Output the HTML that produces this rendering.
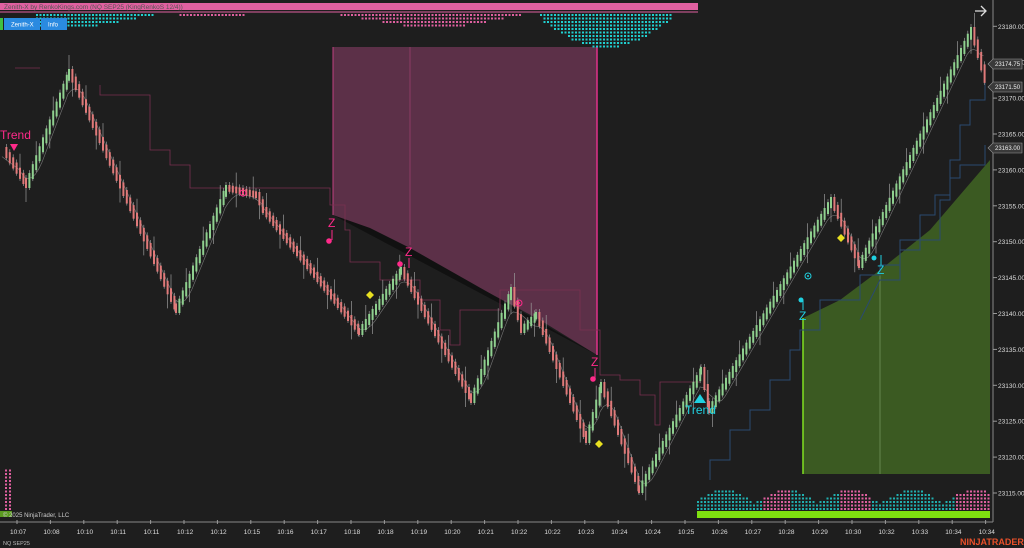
<!DOCTYPE html>
<html><head><meta charset="utf-8"><style>
html,body{margin:0;padding:0;background:#1e1e1e;width:1024px;height:548px;overflow:hidden;font-family:"Liberation Sans",sans-serif}
svg{position:absolute;left:0;top:0}
.t{font-size:6.5px;fill:#ddd}
</style></head><body>
<svg id="s" width="1024" height="548" viewBox="0 0 1024 548">
<rect width="1024" height="548" fill="#1e1e1e"/>
<polygon points="333,47 597,47 597,355 540,320 480,288 420,258 370,232 333,215" fill="#5c3048"/>
<polygon points="333,215 597,355 540,322 470,282 410,248 370,228" fill="#111"/>
<line x1="333" y1="47" x2="333" y2="215" stroke="#c04080" stroke-width="1"/>
<line x1="597" y1="47" x2="597" y2="355" stroke="#e0308a" stroke-width="1.5"/>
<line x1="410" y1="47" x2="410" y2="245" stroke="#a04070" stroke-width="0.7"/>
<polygon points="803,318 840,300 880,270 930,230 990,160 990,474 803,474" fill="#3b5a22"/>
<line x1="803" y1="318" x2="803" y2="474" stroke="#80e020" stroke-width="1.5"/>
<line x1="880" y1="270" x2="880" y2="474" stroke="#7a9a60" stroke-width="0.7"/>
<g id="lines"></g>
<g id="bars"></g>
<rect x="0" y="3" width="698" height="7" fill="#e060a0"/>
<line x1="0" y1="12" x2="698" y2="12" stroke="#e060a0" stroke-width="1"/>
<text x="4" y="9" font-size="6.5" fill="#555">Zenith-X by RenkoKings.com (NQ SEP25 (KingRenkoS 12/4))</text>
<g id="hist"></g>
<rect x="0" y="18" width="3" height="12" fill="#40c040"/>
<rect x="4" y="18" width="36" height="12" fill="#2a8ae0"/>
<rect x="41" y="18" width="26" height="12" fill="#2a8ae0"/>
<text x="11" y="26.5" font-size="6" fill="#fff">Zenith-X</text>
<text x="48" y="26.5" font-size="6" fill="#fff">Info</text>
<rect x="697" y="511" width="293" height="7" fill="#7fe010"/>
<rect x="0" y="511" width="12" height="6" fill="#5a9a20"/>
<text x="3" y="517" font-size="6" fill="#ccc">© 2025 NinjaTrader, LLC</text>
<line x1="0" y1="522" x2="993" y2="522" stroke="#888" stroke-width="1"/>
<line x1="993" y1="0" x2="993" y2="522" stroke="#888" stroke-width="1"/>
<g id="axis"></g>
<text x="3" y="545" font-size="5.5" fill="#bbb">NQ SEP25</text>
<text x="960" y="545" font-size="9" font-weight="bold" fill="#e8502a">NINJATRADER</text>
<path d="M975,11H985M981,6L986,11L981,16" fill="none" stroke="#ddd" stroke-width="1.3"/>
<g font-size="6" fill="#eee">
<polygon points="988,64 993,59 1022,59 1022,69 993,69" fill="#3a3a3a" stroke="#999" stroke-width="0.6"/><text x="995" y="66.2">23174.75</text>
<polygon points="988,87 993,82 1022,82 1022,92 993,92" fill="#3a3a3a" stroke="#999" stroke-width="0.6"/><text x="995" y="89.2">23171.50</text>
<polygon points="988,148 993,143 1022,143 1022,153 993,153" fill="#3a3a3a" stroke="#999" stroke-width="0.6"/><text x="995" y="150.2">23163.00</text>
</g>
<g font-size="12">
<text x="0" y="139" fill="#ff2a8a">Trend</text><polygon points="10,144 18,144 14,151" fill="#ff2a8a"/>
<text x="328" y="227" fill="#ff2a8a">Z</text><line x1="332" y1="230" x2="332" y2="240" stroke="#ff2a8a"/><circle cx="329" cy="241" r="2.8" fill="#ff2a8a"/>
<text x="405" y="256" fill="#ff2a8a">Z</text><line x1="409" y1="258" x2="409" y2="268" stroke="#ff2a8a"/><circle cx="400" cy="264" r="2.8" fill="#ff2a8a"/>
<text x="591" y="366" fill="#ff2a8a">Z</text><line x1="595" y1="368" x2="595" y2="378" stroke="#ff2a8a"/><circle cx="593" cy="379" r="2.8" fill="#ff2a8a"/>
<circle cx="243" cy="193" r="3" fill="none" stroke="#ff2a8a"/><circle cx="243" cy="193" r="1" fill="#ff2a8a"/>
<circle cx="519" cy="303" r="3" fill="none" stroke="#ff2a8a"/><circle cx="519" cy="303" r="1" fill="#ff2a8a"/>
<polygon points="370,291 374,295 370,299 366,295" fill="#e8e020"/>
<polygon points="599,440 603,444 599,448 595,444" fill="#e8e020"/>
<polygon points="841,234 845,238 841,242 837,238" fill="#e8e020"/>
<polygon points="700,394 706,403 694,403" fill="#20d0e0"/><text x="685" y="414" fill="#20d0e0">Trend</text>
<circle cx="801" cy="300" r="2.5" fill="#20d0e0"/><text x="799" y="320" fill="#20d0e0">Z</text><line x1="803" y1="300" x2="803" y2="310" stroke="#20d0e0"/>
<circle cx="874" cy="258" r="2.5" fill="#20d0e0"/><text x="877" y="274" fill="#20d0e0">Z</text><line x1="881" y1="255" x2="881" y2="265" stroke="#20d0e0"/>
<circle cx="808" cy="276" r="3" fill="none" stroke="#20d0e0"/><circle cx="808" cy="276" r="1" fill="#20d0e0"/>
</g>
</svg>
<script>
(function(){
var NS="http://www.w3.org/2000/svg";
function el(p,t,a){var e=document.createElementNS(NS,t);for(var k in a)e.setAttribute(k,a[k]);p.appendChild(e);return e;}
var ax=document.getElementById('axis');
var times=["10:07","10:08","10:10","10:11","10:11","10:12","10:12","10:15","10:16","10:17","10:18","10:18","10:19","10:20","10:21","10:22","10:22","10:23","10:24","10:24","10:25","10:26","10:27","10:28","10:29","10:30","10:32","10:33","10:34","10:34"];
for(var i=0;i<30;i++){var x=17+i*33.4;el(ax,'line',{x1:x,y1:520,x2:x,y2:524,stroke:'#999'});var t=el(ax,'text',{x:x-7,y:534,'class':'t'});t.textContent=times[i];}
for(var p=23115;p<=23180;p+=5){var y=493-(p-23115)*7.18;el(ax,'line',{x1:993,y1:y,x2:997,y2:y,stroke:'#999'});var t=el(ax,'text',{x:998,y:y+2.5,'class':'t'});t.textContent=p+".00";}
var piv=[[2,150],[25,185],[68,72],[175,310],[225,188],[255,195],[262,210],[358,332],[400,270],[470,400],[510,290],[520,330],[535,315],[585,440],[600,385],[638,490],[700,370],[708,410],[830,200],[858,265],[970,30],[985,85]];
var pts=[];for(var i=0;i<piv.length-1;i++){var a=piv[i],b=piv[i+1];for(var x=a[0];x<b[0];x+=3.4){pts.push([x,a[1]+(b[1]-a[1])*(x-a[0])/(b[0]-a[0])]);}}
var g=document.getElementById('bars'),L=document.getElementById('lines');
for(var i=1;i<pts.length;i++){var x=pts[i][0],y0=pts[i-1][1],y1=pts[i][1];var up=y1<y0;var tp=Math.min(y0,y1)-3,hh=Math.abs(y1-y0)+6;
var wl=(i*7)%5==0?14:3;el(g,'line',{x1:x+1,y1:tp-wl,x2:x+1,y2:tp+hh+((i*3)%7==0?14:2),stroke:'#999','stroke-width':0.7});
el(g,'rect',{x:x,y:tp,width:2,height:hh,fill:up?'#8fd08f':'#e07a7a'});}
var d="";for(var i=0;i<pts.length;i++){var sm=0,n=0;for(var j=Math.max(0,i-5);j<=Math.min(pts.length-1,i+1);j++){sm+=pts[j][1];n++;}d+=(i?"L":"M")+pts[i][0].toFixed(1)+","+(sm/n+4).toFixed(1);}
el(L,'path',{d:d,fill:'none',stroke:'#777','stroke-width':0.6});
el(L,'path',{d:"M15,68H40M100,85V95H150V150H170V165H190V188H330V205H345V230H350V262H380V280H420V300H440V330H450V345H460V310H500V290H580V330H600V375H620V380H640V395H655V425H660V382H700",fill:'none',stroke:'#7a3050','stroke-width':0.8});
el(L,'path',{d:"M710,480V460H730V430H750V410H770V380H790V350H800V330H820V300H860V275H880V265H900V250H920V240H940V200H950V160H960V125H970V100H985V80",fill:'none',stroke:'#2a4a70','stroke-width':1});
el(L,'path',{d:"M860,320L880,280H900V240H920V215H935V195H950V178H960V165H985V145",fill:'none',stroke:'#2a4a70','stroke-width':1});
var h=document.getElementById('hist');
for(var x=36;x<698;x+=3.5){var v=Math.sin(x/40)*0.6+Math.sin(x/110+1)*0.8;var c=v>0?'#20d0d0':'#e060a0';var n=Math.round(Math.abs(v)*3);if(x>540&&x<670){c='#20d0d0';n=Math.round(8*Math.sin((x-540)/130*Math.PI))+2;}
for(var k=0;k<n;k++)el(h,'rect',{x:x,y:14+k*3.5,width:2,height:2,fill:c});}
for(var x=697;x<990;x+=3.5){var n=2+Math.round(4*Math.abs(Math.sin(x/20)));var c=(x>760&&x<790)||(x>840&&x<870)||x>955?'#e060a0':'#20b0b0';
for(var k=0;k<n;k++)el(h,'rect',{x:x,y:508-k*3.5,width:2,height:2,fill:c});}
[5,9].forEach(function(x){for(var k=0;k<12;k++)el(h,'rect',{x:x,y:508-k*3.5,width:2,height:2,fill:'#e060a0'});});
})();
</script>
</body></html>
